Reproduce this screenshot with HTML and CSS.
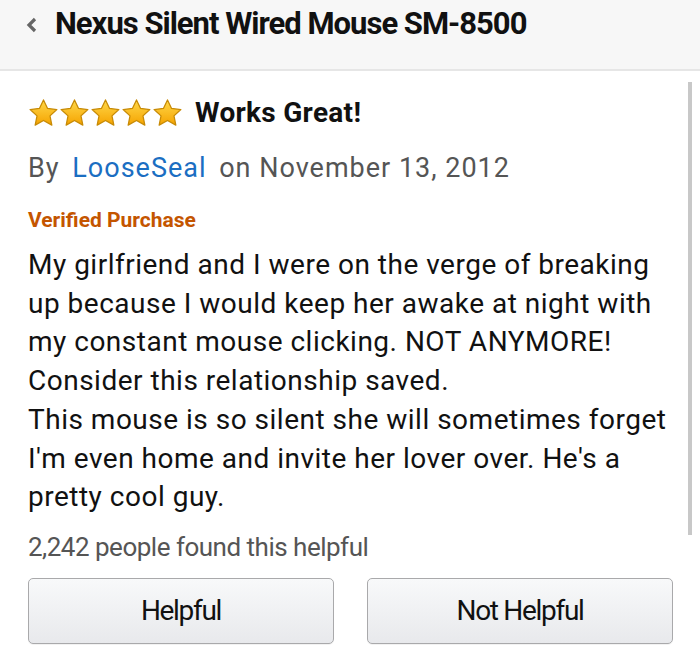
FILE: index.html
```html
<!DOCTYPE html>
<html>
<head>
<meta charset="utf-8">
<link rel="stylesheet" href="styles.css">
</head>
<body>
<header class="topbar">
  <svg class="chev" width="13" height="16" viewBox="0 0 13 16"><path d="M10 2 L4 8 L10 14" fill="none" stroke="#666" stroke-width="3.2"/></svg>
  <h1 class="title">Nexus Silent Wired Mouse SM-8500</h1>
</header>
<main class="review">
  <div class="headline">
    <div class="stars">
      <svg class="star" viewBox="0 0 32 30"><defs><linearGradient id="g" x1="0" y1="0" x2="0" y2="1"><stop offset="0" stop-color="#ffd84a"/><stop offset="1" stop-color="#f5a300"/></linearGradient></defs><path d="M16 1.5 L20.2 10.3 L29.8 11.4 L22.7 18 L24.6 27.5 L16 22.7 L7.4 27.5 L9.3 18 L2.2 11.4 L11.8 10.3 Z" fill="url(#g)" stroke="#c78a05" stroke-width="1.3" stroke-linejoin="round"/></svg>
      <svg class="star" viewBox="0 0 32 30"><path d="M16 1.5 L20.2 10.3 L29.8 11.4 L22.7 18 L24.6 27.5 L16 22.7 L7.4 27.5 L9.3 18 L2.2 11.4 L11.8 10.3 Z" fill="url(#g)" stroke="#c78a05" stroke-width="1.3" stroke-linejoin="round"/></svg>
      <svg class="star" viewBox="0 0 32 30"><path d="M16 1.5 L20.2 10.3 L29.8 11.4 L22.7 18 L24.6 27.5 L16 22.7 L7.4 27.5 L9.3 18 L2.2 11.4 L11.8 10.3 Z" fill="url(#g)" stroke="#c78a05" stroke-width="1.3" stroke-linejoin="round"/></svg>
      <svg class="star" viewBox="0 0 32 30"><path d="M16 1.5 L20.2 10.3 L29.8 11.4 L22.7 18 L24.6 27.5 L16 22.7 L7.4 27.5 L9.3 18 L2.2 11.4 L11.8 10.3 Z" fill="url(#g)" stroke="#c78a05" stroke-width="1.3" stroke-linejoin="round"/></svg>
      <svg class="star" viewBox="0 0 32 30"><path d="M16 1.5 L20.2 10.3 L29.8 11.4 L22.7 18 L24.6 27.5 L16 22.7 L7.4 27.5 L9.3 18 L2.2 11.4 L11.8 10.3 Z" fill="url(#g)" stroke="#c78a05" stroke-width="1.3" stroke-linejoin="round"/></svg>
    </div>
    <h2 class="rtitle">Works Great!</h2>
  </div>
  <p class="byline">By <a class="author">LooseSeal</a> on November 13, 2012</p>
  <p class="verified">Verified Purchase</p>
  <p class="body">My girlfriend and I were on the verge of breaking up because I would keep her awake at night with my constant mouse clicking. NOT ANYMORE! Consider this relationship saved.<br>This mouse is so silent she will sometimes forget I'm even home and invite her lover over. He's a pretty cool guy.</p>
  <p class="helpful">2,242 people found this helpful</p>
  <div class="buttons">
    <button class="btn">Helpful</button>
    <button class="btn">Not Helpful</button>
  </div>
</main>
<div class="scrollbar"></div>
</body>
</html>
```
FILE: styles.css
```css
html, body { margin: 0; padding: 0; background: #fff; }
body { width: 700px; height: 664px; overflow: hidden; font-family: Roboto, "Liberation Sans", sans-serif; position: relative; }
.topbar { height: 71px; background: #f7f7f7; border-bottom: 2px solid #e6e6e6; display: flex; align-items: flex-start; padding: 0 0 0 25px; box-sizing: border-box; }
.chev { margin-top: 17px; }
.title { margin: 4px 0 0 17px; font-size: 31px; line-height: 40px; font-weight: 700; color: #111; letter-spacing: -1px; white-space: nowrap; }
.review { padding: 0 28px; }
.headline { display: flex; align-items: center; margin-top: 27px; height: 30px; }
.stars { display: flex; }
.star { width: 31px; height: 30px; }
.rtitle { margin: 0 0 0 12px; font-size: 28px; line-height: 30px; font-weight: 700; color: #111; letter-spacing: 0.3px; }
.byline { margin: 23px 0 0; font-size: 27px; color: #555; line-height: 34px; letter-spacing: 1px; }
.author { color: #1b6ec2; margin: 0 5px 0 5px; }
.verified { margin: 23px 0 0; font-size: 21px; font-weight: 700; color: #c45500; line-height: 24px; }
.body { margin: 14px 0 0; font-size: 28px; line-height: 38.7px; color: #111; letter-spacing: 0.5px; }
.helpful { margin: 15px 0 0; font-size: 26px; color: #555; line-height: 30px; letter-spacing: -0.5px; }
.buttons { display: flex; gap: 33px; margin-top: 16px; }
.btn { flex: 0 0 306px; height: 66px; border: 1px solid #a9a9ab; border-radius: 5px; background: linear-gradient(#f8f9fa, #e8e9ec); font-family: Roboto, "Liberation Sans", sans-serif; font-size: 28px; letter-spacing: -1.3px; color: #111; box-shadow: 0 1px 0 rgba(0,0,0,0.05); }
.scrollbar { position: absolute; left: 688px; top: 82px; width: 4px; height: 453px; background: #c8c8c8; }
```
